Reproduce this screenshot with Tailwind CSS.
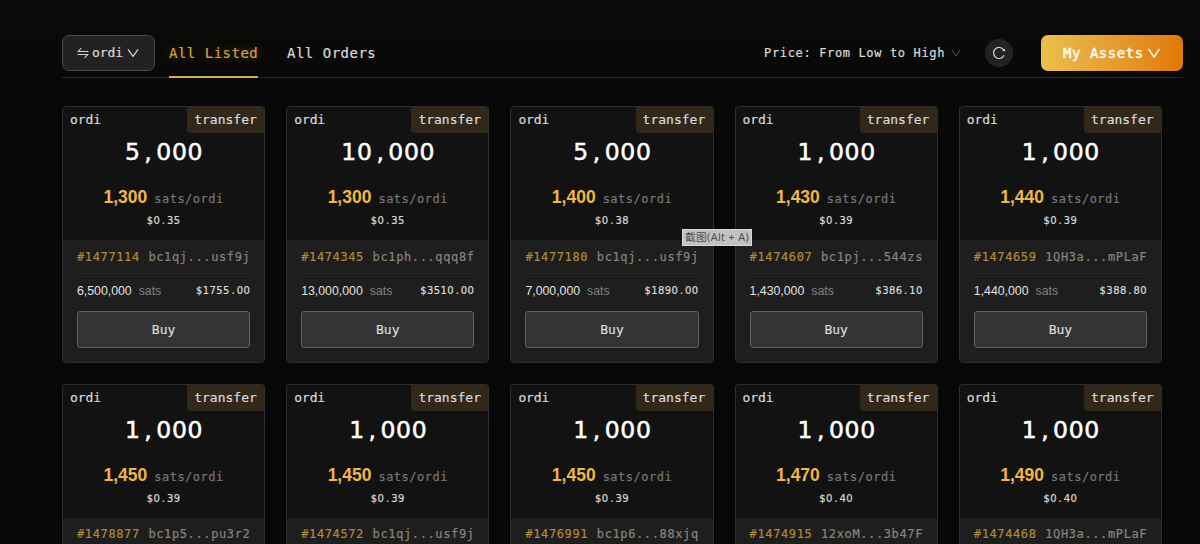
<!DOCTYPE html>
<html lang="en">
<head>
<meta charset="utf-8">
<title>ordi market</title>
<script src="https://cdn.jsdelivr.net/npm/@tailwindcss/browser@4"></script>
</head>
<body class="relative h-[544px] w-[1200px] overflow-hidden bg-[#070707] bg-linear-to-b from-[#0d0b09] via-[#080808] via-15% to-[#070707] font-['DejaVu_Sans_Mono',monospace] text-[#dadada] [-webkit-text-stroke:0.2px_currentColor]">
<header class="ml-[62px] mt-[35px] flex h-[43px] w-[1121px] items-start border-b border-[#292929]">
  <button class="flex h-9 w-[93px] items-center rounded-[7px] border border-[#4b4a48] bg-[#232221] pl-[14px] text-[13px] tracking-[-0.1px]">
    <svg class="mr-[3px] h-3 w-3" viewBox="0 0 12 12" fill="none" stroke="#d4d4d4" stroke-width="1.1"><path d="M4.4 1 1.2 4.5h10.2M.6 7.5h10.2L7.6 11"/></svg>
    <span>ordi</span>
    <svg class="ml-1 h-3 w-3" viewBox="0 0 12 12" fill="none" stroke="#d4d4d4" stroke-width="1.2"><path d="M1 2.3 6 9.4 11 2.3"/></svg>
  </button>
  <nav class="ml-[14px] flex h-[43px] gap-[29px] text-[14px] leading-9 tracking-[0.5px]">
    <span class="h-[43px] w-[89px] whitespace-nowrap border-b-2 border-[#d9ae45] text-[#cfa338] [text-shadow:0_0_12px_#d9a03066]">All Listed</span>
    <span class="whitespace-nowrap">All Orders</span>
  </nav>
  <div class="ml-auto flex h-9 items-center">
    <span class="text-[12px] tracking-[0.64px]">Price: From Low to High</span>
    <svg class="ml-[6px] h-[10px] w-[10px]" viewBox="0 0 10 10" fill="none" stroke="#555"><path d="M1 2 5 8 9 2"/></svg>
    <span class="ml-6 flex h-7 w-7 items-center justify-center rounded-full bg-[#232323]">
      <svg class="h-[14px] w-[14px]" viewBox="0 0 14 14" fill="none" stroke="#d2d2d2" stroke-width="1.2"><path d="M12.1 9.2A5.5 5.5 0 1 1 11.7 4"/><path d="M12.9 2.4V5.4L10 4.8z" fill="#d2d2d2" stroke="none"/></svg>
    </span>
    <button class="ml-7 flex h-9 w-[142px] items-center rounded-[7px] bg-linear-to-r from-[#e9c04b] to-[#df7900] pl-[22px] text-[14px] tracking-[0.54px] text-[#fffaf0] [-webkit-text-stroke:0.5px_#fffaf0]">
      <span>My Assets</span>
      <svg class="ml-[3px] h-[14px] w-[14px]" viewBox="0 0 14 14" fill="none" stroke="#fffaf0" stroke-width="1.4"><path d="M1.5 3 7 11 12.5 3"/></svg>
    </button>
  </div>
</header>
<main id="cards" class="ml-[62px] mt-[28.3px] grid w-[1100px] grid-cols-5 gap-[21px]"></main>
<div class="absolute left-[682px] top-[229px] flex h-[17px] w-[70px] items-center justify-center whitespace-nowrap border border-[#d8d6d6] bg-[#c4c1c1] font-['Noto_Sans','Noto_Sans_CJK_SC',sans-serif] text-[10.7px] tracking-[0.4px] text-[#4c4c4c] [-webkit-text-stroke:0]">截图(Alt + A)</div>
<script>
const rows = [
  ['5,000','1,300','$0.35','#1477114','bc1qj...usf9j','6,500,000','$1755.00'],
  ['10,000','1,300','$0.35','#1474345','bc1ph...qqq8f','13,000,000','$3510.00'],
  ['5,000','1,400','$0.38','#1477180','bc1qj...usf9j','7,000,000','$1890.00'],
  ['1,000','1,430','$0.39','#1474607','bc1pj...544zs','1,430,000','$386.10'],
  ['1,000','1,440','$0.39','#1474659','1QH3a...mPLaF','1,440,000','$388.80'],
  ['1,000','1,450','$0.39','#1478877','bc1p5...pu3r2'],
  ['1,000','1,450','$0.39','#1474572','bc1qj...usf9j'],
  ['1,000','1,450','$0.39','#1476991','bc1p6...88xjq'],
  ['1,000','1,470','$0.40','#1474915','12xoM...3b47F'],
  ['1,000','1,490','$0.40','#1474468','1QH3a...mPLaF']
];
// Commas and points take a full digit cell so figures stay evenly spaced.
const cell = s => s.replace(/[.,]/g, '<span class="px-[0.16em]">$&</span>');
const total = r => r[5] ? `
    <div class="flex h-[37px] justify-between leading-[34px]">
      <span class="font-['Liberation_Sans',sans-serif] text-[12.3px] text-[#e2e2e2] [-webkit-text-stroke:0]">${r[5]}<span class="ml-[7px] text-[#818181]">sats</span></span>
      <span class="font-['DejaVu_Sans',sans-serif] text-[10px] tracking-[0.4px]">${cell(r[6])}</span>
    </div>
    <button class="h-[37px] rounded-[3px] border border-[#626262] bg-[#343434] text-[13px]">Buy</button>` : '';
document.getElementById('cards').innerHTML = rows.map(r => `
<article class="flex ${r[5] ? 'h-[256.7px] rounded-[4px] border' : 'h-[160px] rounded-t-[4px] border border-b-0'} flex-col overflow-hidden border-[#2c2c2c] bg-[#121212]">
  <div class="flex h-[26px] items-start justify-between pl-[7px] text-[13px] leading-[25px]">
    <span class="tracking-[-0.1px]">ordi</span>
    <span class="h-[26px] w-[77px] rounded-bl-[4px] bg-[#31281a] pl-[7px]">transfer</span>
  </div>
  <div class="h-[39px] pl-[1px] text-center font-['DejaVu_Sans',sans-serif] text-[23.5px] leading-[39px] tracking-[0.7px] text-white [-webkit-text-stroke:0.5px_white]">${cell(r[0])}</div>
  <div class="mt-[12px] flex h-[27px] items-baseline justify-center leading-[26px]">
    <span class="font-['Liberation_Sans',sans-serif] text-[17.5px] font-bold text-[#edb843] [-webkit-text-stroke:0]">${r[1]}</span>
    <span class="ml-[7px] text-[12px] tracking-[0.5px] text-[#777]">sats/ordi</span>
  </div>
  <div class="h-[29px] shrink-0 text-center font-['DejaVu_Sans',sans-serif] text-[10px] leading-[19px] tracking-[0.4px]">${cell(r[2])}</div>
  <div class="flex grow flex-col bg-[#1e1e1e] px-[14px]">
    <div class="flex h-[34px] justify-between whitespace-nowrap text-[12px] tracking-[0.62px] ${r[5] ? 'border-b border-[#292929] leading-[34px]' : 'leading-[32px]'}">
      <span class="text-[#b08a35]">${r[3]}</span><span class="-mr-[0.2px] text-[#88857c]">${r[4]}</span>
    </div>${total(r)}
  </div>
</article>`).join('');
</script>
</body>
</html>
